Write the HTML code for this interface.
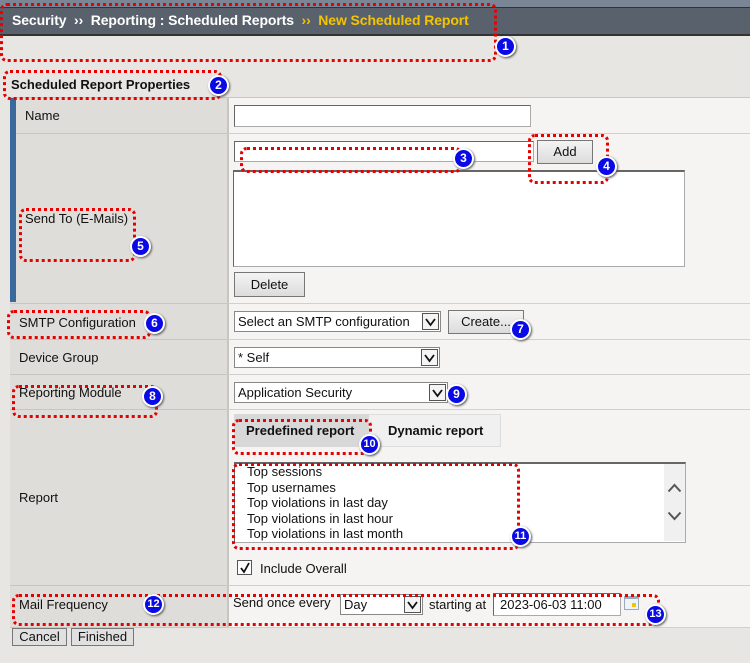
<!DOCTYPE html>
<html><head><meta charset="utf-8"><style>
*{box-sizing:border-box;margin:0;padding:0}
body{width:750px;height:663px;background:#e8e6e2;font-family:"Liberation Sans",Arial,sans-serif;font-size:13px;color:#111;position:relative;overflow:hidden}
.a{position:absolute}
.lbl{position:absolute;left:10px;width:217px;background:#dfddd9;border-bottom:1px solid #c8c6c2}
.val{position:absolute;left:227px;right:0;background:#f5f4f2;border-bottom:1px solid #d2d0cc;border-left:2px solid #c8c6c2}
.t{position:absolute;font-size:13px}
.inp{position:absolute;background:#fff;border:1px solid #aaa;border-top-color:#666;border-left-color:#666}
.btn{position:absolute;background:linear-gradient(#f4f4f4,#dcdcdc);border:1px solid #777;text-align:center;font-size:13px}
.sel{position:absolute;background:#fff;border:1px solid #888;font-size:13px;padding:2px 3px;white-space:nowrap;overflow:hidden}
.dd{position:absolute;right:1px;top:1px;bottom:1px;width:17px;border:1px solid #555;background:#f4f4f4}
.dd svg{position:absolute;left:2px;top:3px}
.box{position:absolute;border:3px dotted #e60000;border-radius:7px}
.c{position:absolute;width:21px;height:21px;border-radius:50%;background:#0a0ae6;border:2px solid #fff;box-shadow:1px 1px 2px #555;color:#fff;font-weight:bold;font-size:12px;text-align:center;line-height:17px}
</style></head><body>
<div class="a" style="left:0;top:0;width:750px;height:7px;background:#7a8696"></div>
<div class="a" style="left:0;top:7px;width:750px;height:29px;background:#58616c;border-top:1px solid #333;border-bottom:2px solid #333"></div>
<div class="a" style="left:12px;top:12px;color:#fff;font-weight:bold;font-size:14px;letter-spacing:-0.1px">Security &nbsp;›› &nbsp;Reporting : Scheduled Reports &nbsp;<span style="color:#f5c400">›› &nbsp;New Scheduled Report</span></div>
<div class="a" style="left:11px;top:77px;font-weight:bold;font-size:13px">Scheduled Report Properties</div>
<div class="a" style="left:10px;top:97px;width:740px;height:1px;background:#c8c6c2"></div>

<div class="lbl" style="top:98px;height:36px"></div><div class="val" style="top:98px;height:36px"></div>
<div class="lbl" style="top:134px;height:170px"></div><div class="val" style="top:134px;height:170px"></div>
<div class="lbl" style="top:304px;height:36px"></div><div class="val" style="top:304px;height:36px"></div>
<div class="lbl" style="top:340px;height:35px"></div><div class="val" style="top:340px;height:35px"></div>
<div class="lbl" style="top:375px;height:35px"></div><div class="val" style="top:375px;height:35px"></div>
<div class="lbl" style="top:410px;height:176px"></div><div class="val" style="top:410px;height:176px"></div>
<div class="lbl" style="top:586px;height:42px"></div><div class="val" style="top:586px;height:42px"></div>
<div class="a" style="left:10px;top:98px;width:6px;height:204px;background:#3a6a9c"></div>

<div class="t" style="left:25px;top:108px">Name</div>
<div class="t" style="left:25px;top:211px">Send To (E-Mails)</div>
<div class="t" style="left:19px;top:315px">SMTP Configuration</div>
<div class="t" style="left:19px;top:350px">Device Group</div>
<div class="t" style="left:19px;top:385px">Reporting Module</div>
<div class="t" style="left:19px;top:490px">Report</div>
<div class="t" style="left:19px;top:597px">Mail Frequency</div>

<div class="inp" style="left:234px;top:105px;width:297px;height:22px"></div>
<div class="inp" style="left:234px;top:141px;width:300px;height:21px"></div>
<div class="btn" style="left:537px;top:140px;width:56px;height:24px;line-height:22px">Add</div>
<div class="inp" style="left:233px;top:170px;width:452px;height:97px;border-top:2px solid #666"></div>
<div class="btn" style="left:234px;top:272px;width:71px;height:25px;line-height:23px">Delete</div>

<div class="sel" style="left:234px;top:311px;width:207px;height:21px">Select an SMTP configuration<div class="dd"><svg width="11" height="10"><path d="M1 2 L5.5 8 L10 2" fill="none" stroke="#111" stroke-width="1.8"/></svg></div></div>
<div class="btn" style="left:448px;top:310px;width:76px;height:24px;line-height:22px">Create...</div>
<div class="sel" style="left:234px;top:347px;width:206px;height:21px">* Self<div class="dd"><svg width="11" height="10"><path d="M1 2 L5.5 8 L10 2" fill="none" stroke="#111" stroke-width="1.8"/></svg></div></div>
<div class="sel" style="left:234px;top:382px;width:214px;height:21px">Application Security<div class="dd"><svg width="11" height="10"><path d="M1 2 L5.5 8 L10 2" fill="none" stroke="#111" stroke-width="1.8"/></svg></div></div>

<div class="a" style="left:234px;top:414px;width:267px;height:33px;background:#f0f0f0;border:1px solid #ddd"></div>
<div class="a" style="left:234px;top:414px;width:135px;height:33px;background:#d8d8d8"></div>
<div class="a" style="left:246px;top:423px;font-weight:bold;font-size:13px">Predefined report</div>
<div class="a" style="left:388px;top:423px;font-weight:bold;font-size:13px">Dynamic report</div>

<div class="inp" style="left:234px;top:462px;width:452px;height:81px;border-top:2px solid #666"></div>
<div class="a" style="left:664px;top:464px;width:21px;height:77px;background:#f0f0f0"></div>
<svg class="a" style="left:667px;top:483px" width="15" height="10"><path d="M1.5 8.5 L7.5 2 L13.5 8.5" fill="none" stroke="#555" stroke-width="2"/></svg>
<svg class="a" style="left:667px;top:511px" width="15" height="10"><path d="M1.5 1.5 L7.5 8 L13.5 1.5" fill="none" stroke="#555" stroke-width="2"/></svg>
<div class="a" style="left:247px;top:464px;line-height:15.5px;font-size:13px">Top sessions<br>Top usernames<br>Top violations in last day<br>Top violations in last hour<br>Top violations in last month</div>
<div class="a" style="left:237px;top:560px;width:15px;height:15px;border:1px solid #555;background:#fff"><svg class="a" style="left:1px;top:1px" width="12" height="12"><path d="M2 6 L5 10 L10 1" fill="none" stroke="#111" stroke-width="1.8"/></svg></div>
<div class="t" style="left:260px;top:561px">Include Overall</div>

<div class="t" style="left:233px;top:595px">Send once every</div>
<div class="sel" style="left:340px;top:594px;width:83px;height:21px">Day<div class="dd"><svg width="11" height="10"><path d="M1 2 L5.5 8 L10 2" fill="none" stroke="#111" stroke-width="1.8"/></svg></div></div>
<div class="t" style="left:429px;top:597px">starting at</div>
<div class="inp" style="left:493px;top:593px;width:128px;height:23px;padding:3px 6px;font-size:13px">2023-06-03 11:00</div>
<div class="a" style="left:624px;top:596px;width:15px;height:14px;border:1px solid #9ab;background:#eef3fa;border-top:3px solid #9ab"><div class="a" style="left:7px;top:4px;width:4px;height:4px;background:#f5c400"></div></div>

<div class="btn" style="left:12px;top:628px;width:55px;height:18px;line-height:16px;background:#e0e0e0">Cancel</div>
<div class="btn" style="left:71px;top:628px;width:63px;height:18px;line-height:16px;background:#e0e0e0">Finished</div>

<div class="box" style="left:0;top:3px;width:497px;height:59px"></div>
<div class="box" style="left:3px;top:70px;width:219px;height:30px"></div>
<div class="box" style="left:240px;top:147px;width:222px;height:26px"></div>
<div class="box" style="left:528px;top:134px;width:81px;height:50px"></div>
<div class="box" style="left:19px;top:208px;width:117px;height:54px"></div>
<div class="box" style="left:7px;top:310px;width:144px;height:29px"></div>
<div class="box" style="left:12px;top:385px;width:146px;height:33px"></div>
<div class="box" style="left:232px;top:419px;width:140px;height:36px"></div>
<div class="box" style="left:232px;top:463px;width:288px;height:87px"></div>
<div class="box" style="left:12px;top:594px;width:648px;height:32px"></div>

<div class="c" style="left:495px;top:36px">1</div>
<div class="c" style="left:208px;top:75px">2</div>
<div class="c" style="left:453px;top:148px">3</div>
<div class="c" style="left:596px;top:156px">4</div>
<div class="c" style="left:130px;top:236px">5</div>
<div class="c" style="left:144px;top:313px">6</div>
<div class="c" style="left:510px;top:319px">7</div>
<div class="c" style="left:142px;top:386px">8</div>
<div class="c" style="left:446px;top:384px">9</div>
<div class="c" style="left:359px;top:434px;font-size:11px">10</div>
<div class="c" style="left:510px;top:526px;font-size:11px">11</div>
<div class="c" style="left:143px;top:594px;font-size:11px">12</div>
<div class="c" style="left:645px;top:604px;font-size:11px">13</div>
</body></html>
